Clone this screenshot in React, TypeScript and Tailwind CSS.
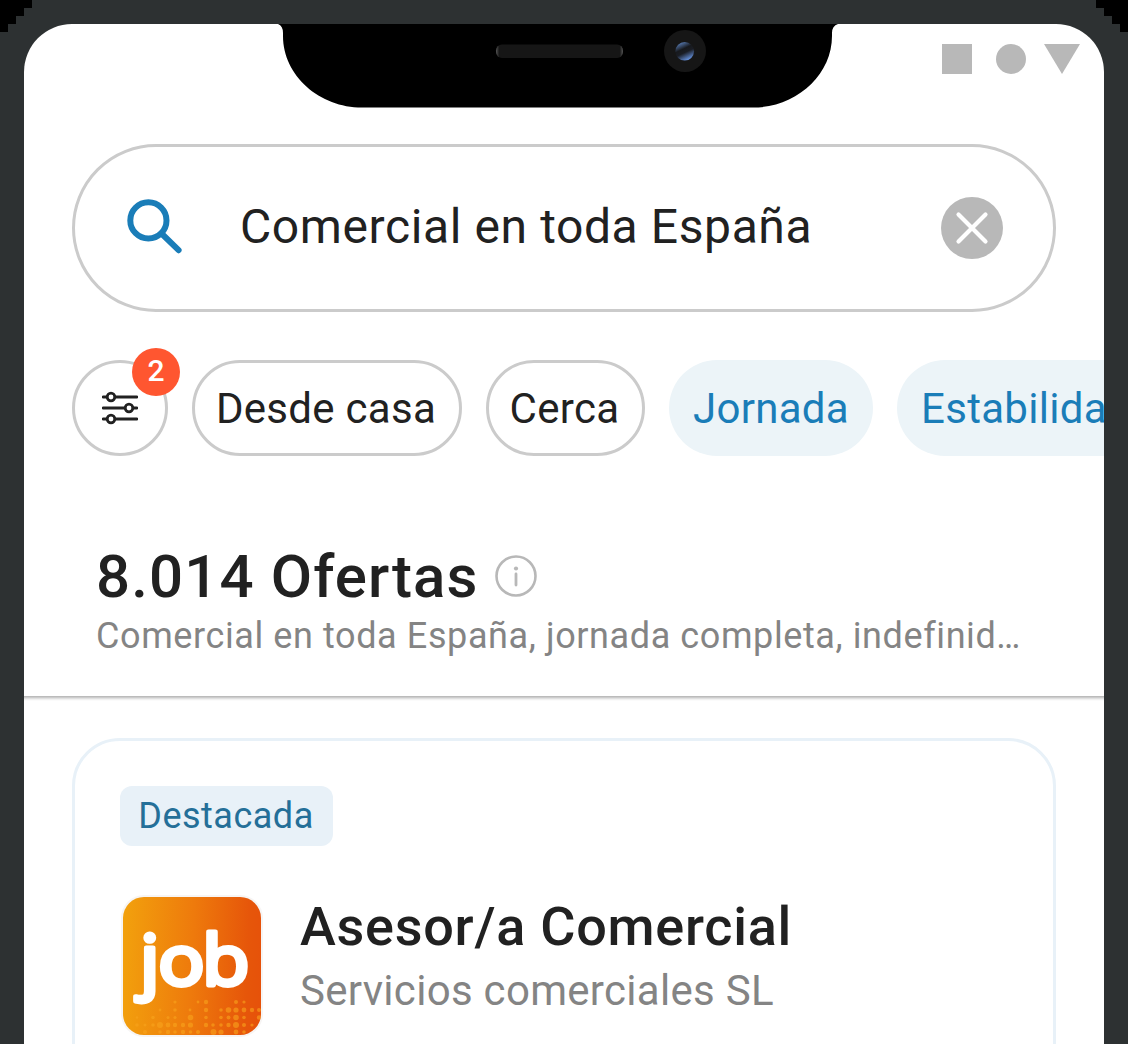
import React from "react";

const cornerSteps = [32, 24, 16, 8];

function CornerSteps({ side }: { side: "left" | "right" }) {
  return (
    <div
      className={
        side === "left"
          ? "absolute left-0 top-0 flex flex-col items-start"
          : "absolute right-0 top-0 flex flex-col items-end"
      }
    >
      {cornerSteps.map((w) => (
        <div key={w} className="h-2 bg-black" style={{ width: w }} />
      ))}
    </div>
  );
}

function Notch() {
  return (
    <svg className="absolute left-[250px] top-0 h-[84px] w-[570px]" viewBox="274 24 570 84">
      <defs>
        <linearGradient id="lens" x1="0.25" y1="0.05" x2="0.7" y2="1">
          <stop offset="0" stopColor="#5577ad" />
          <stop offset="0.35" stopColor="#17191d" />
          <stop offset="0.55" stopColor="#1a1d24" />
          <stop offset="1" stopColor="#6d9df0" />
        </linearGradient>
        <linearGradient id="speaker" x1="0" x2="1" y1="0" y2="0">
          <stop offset="0" stopColor="#555" />
          <stop offset="0.025" stopColor="#161616" />
          <stop offset="0.975" stopColor="#161616" />
          <stop offset="1" stopColor="#555" />
        </linearGradient>
      </defs>
      <path d="M278 24Q283 26 283 33V36C283 76 320 107.6 362 107.6H753C795 107.6 832 76 832 36V33Q832 26 838 24Z" fill="#000" />
      <rect x="496" y="44.5" width="127" height="13.5" rx="6" fill="url(#speaker)" />
      <circle cx="685" cy="51" r="21" fill="#161616" />
      <circle cx="684.7" cy="51.3" r="9.3" fill="url(#lens)" />
    </svg>
  );
}

function StatusIcons() {
  return (
    <div className="flex h-[120px] items-start justify-end pr-6 pt-5">
      <div className="size-[30px] bg-[#b8b8b8]" />
      <div className="ml-6 size-[30px] rounded-full bg-[#b8b8b8]" />
      <svg className="ml-[18px] h-[30px] w-9" viewBox="0 0 36 30">
        <path d="M0 0H36L18 30Z" fill="#b8b8b8" />
      </svg>
    </div>
  );
}

function SearchBar() {
  return (
    <div className="mx-12 flex h-[168px] items-center rounded-full border-[3px] border-[#cbcbcb] pl-[50px] pr-[50px]">
      <svg className="h-[60px] w-[60px] shrink-0" viewBox="125 198 60 60" fill="none" stroke="#1a7db8">
        <circle cx="148.4" cy="220.4" r="18.1" strokeWidth="6" />
        <path d="M161.5 233.5L178.6 250.2" strokeWidth="6" strokeLinecap="round" />
      </svg>
      <span className="ml-[55px] flex-1 whitespace-nowrap pb-0.5 text-[48px] leading-[56px] tracking-[0.6px] text-[#212121]">
        Comercial en toda España
      </span>
      <svg className="size-[62px] shrink-0" viewBox="0 0 62 62">
        <circle cx="31" cy="31" r="31" fill="#b8b8b8" />
        <path d="M17.5 17.5L44.5 44.5M44.5 17.5L17.5 44.5" stroke="#fff" strokeWidth="4.2" strokeLinecap="round" />
      </svg>
    </div>
  );
}

const chip =
  "flex h-24 shrink-0 items-center justify-center whitespace-nowrap rounded-full pt-0.5 text-[42px] leading-[48px] tracking-[0.3px]";

function Filters() {
  return (
    <div className="mt-9 flex gap-6 overflow-hidden pl-12 pt-3">
      <div className="relative flex size-24 shrink-0 items-center justify-center rounded-full border-[3px] border-[#cbcbcb]">
        <svg className="h-[34px] w-9" viewBox="102 391 36 34" stroke="#212121" strokeLinecap="round">
          <path d="M103 397H137M103 408H137M103 419H137" strokeWidth="2.8" />
          <circle cx="111" cy="397" r="3.8" strokeWidth="2.8" fill="#fff" />
          <circle cx="129" cy="408" r="3.8" strokeWidth="2.8" fill="#fff" />
          <circle cx="111" cy="419" r="3.8" strokeWidth="2.8" fill="#fff" />
        </svg>
        <div className="absolute -right-[15px] -top-[15px] flex size-12 items-center justify-center rounded-full bg-[#ff5630] pb-0.5 text-[30px] font-medium leading-none text-white">
          2
        </div>
      </div>
      <div className={`${chip} w-[270px] border-[3px] border-[#cbcbcb] pr-0.5 text-[#212121]`}>Desde casa</div>
      <div className={`${chip} w-[159px] border-[3px] border-[#cbcbcb] pr-0.5 text-[#212121]`}>Cerca</div>
      <div className={`${chip} w-[204px] bg-[#ecf4f8] text-[#1a7db8]`}>Jornada</div>
      <div className={`${chip} bg-[#ecf4f8] px-6 text-[#1a7db8]`}>Estabilidad</div>
    </div>
  );
}

function Results() {
  return (
    <div className="-mx-2 h-[240px] bg-white px-20 pt-[84px] shadow-[0_3px_3px_-1px_rgba(0,0,0,0.32)]">
      <div className="flex items-center">
        <h1 className="whitespace-nowrap pt-px text-[60px] font-medium leading-[71px] tracking-[1.13px] text-[#212121]">
          8.014 Ofertas
        </h1>
        <svg className="ml-4 size-[42px]" viewBox="0 0 42 42" fill="none" stroke="#b8b8b8">
          <circle cx="21" cy="21" r="19.5" strokeWidth="2.6" />
          <path d="M21 19V30" strokeWidth="2.8" strokeLinecap="round" />
          <circle cx="21" cy="13.5" r="2.1" fill="#b8b8b8" stroke="none" />
        </svg>
      </div>
      <p className="whitespace-nowrap text-[36px] leading-[48px] tracking-[0.6px] text-[#848484]">
        Comercial en toda España, jornada completa, indefinid…
      </p>
    </div>
  );
}

// Halftone dots along the lower edge of the logo: [x, y, radius].
const dots: [number, number, number][] = [
  [54, 107, 1.6], [77, 107, 1.4], [85, 107, 2.2], [115, 107, 2], [123, 107, 1.6],
  [39, 115, 1.4], [54, 115, 1.8], [69, 115, 1.4], [85, 115, 2.2], [100, 115, 1.8], [107.5, 115, 2.8], [115, 115, 2.6], [123, 115, 2.4], [131, 115, 2.2], [138, 115, 2],
  [16, 122.5, 1.3], [32, 122.5, 1.8], [47, 122.5, 1.5], [54, 122.5, 1.6], [69.5, 122.5, 2.8], [85, 122.5, 1.8], [100, 122.5, 1.8], [107.5, 122.5, 2], [115, 122.5, 2.8], [123, 122.5, 1.8], [138, 122.5, 2.2],
  [16, 130, 1.8], [24, 130, 1.5], [32, 130, 1.8], [39, 130, 3], [47, 130, 2.4], [54, 130, 2.2], [62, 130, 2.2], [69.5, 130, 2.6], [85, 130, 2.2], [92, 130, 1.8], [100, 130, 1.8], [107.5, 130, 2.2], [115, 130, 3], [123, 130, 2], [131, 130, 1.6],
  [24, 137, 2], [39, 137, 1.8], [47, 137, 2.2], [54, 137, 1.8], [62, 137, 2.2], [69.5, 137, 1.8], [77, 137, 2], [92.5, 137, 3], [100, 137, 2.6], [115, 137, 2.4], [123, 137, 1.8],
];

function JobLogo() {
  return (
    <svg className="-ml-px size-[142px] shrink-0" viewBox="0 0 142 142">
      <defs>
        <linearGradient id="job" x1="0" x2="1" y1="0.48" y2="0.52">
          <stop offset="0" stopColor="#f2a00d" />
          <stop offset="0.5" stopColor="#ee7a0c" />
          <stop offset="0.9" stopColor="#e6560a" />
          <stop offset="1" stopColor="#e6520a" />
        </linearGradient>
        <clipPath id="tile">
          <rect x="2" y="2" width="138" height="138" rx="21" />
        </clipPath>
      </defs>
      <rect width="142" height="142" rx="23" fill="#f7f5f4" />
      <g clipPath="url(#tile)">
        <rect x="2" y="2" width="138" height="138" fill="url(#job)" />
        {dots.map(([x, y, r], i) => (
          <circle key={i} cx={x} cy={y} r={r} fill="#f9a41c" fillOpacity="0.6" />
        ))}
      </g>
      <text
        x="17.2 33.9 73.8"
        y="90"
        transform="scale(1.1 1)"
        className="font-['Open_Sans'] text-[70px]"
        fill="#fff"
        stroke="#fff"
        strokeWidth="4.8"
        strokeLinejoin="round"
      >
        job
      </text>
    </svg>
  );
}

function OfferCard() {
  return (
    <div className="mx-12 mt-[42px] h-[420px] rounded-[48px] border-[3px] border-[#e8f1f8] pl-[45px] pt-[45px]">
      <span className="flex h-[60px] w-[213px] items-center justify-center rounded-xl bg-[#e8f1f8] pr-px text-[36px] leading-none tracking-[0.5px] text-[#246f98]">
        Destacada
      </span>
      <div className="mt-[49px] flex pl-[2px]">
        <JobLogo />
        <div className="ml-[37px] whitespace-nowrap">
          <h2 className="text-[54px] font-medium leading-[64px] tracking-[0.73px] text-[#212121]">Asesor/a Comercial</h2>
          <p className="text-[42px] leading-[64px] tracking-[0.3px] text-[#848484]">Servicios comerciales SL</p>
        </div>
      </div>
    </div>
  );
}

export default function App() {
  return (
    <div className="relative h-[1044px] w-[1128px] overflow-hidden bg-[#2d3132] px-6 pt-6 font-[Roboto,sans-serif]">
      <CornerSteps side="left" />
      <CornerSteps side="right" />
      <div className="relative h-[1020px] overflow-hidden rounded-t-[48px] bg-white">
        <Notch />
        <StatusIcons />
        <SearchBar />
        <Filters />
        <Results />
        <OfferCard />
      </div>
    </div>
  );
}
